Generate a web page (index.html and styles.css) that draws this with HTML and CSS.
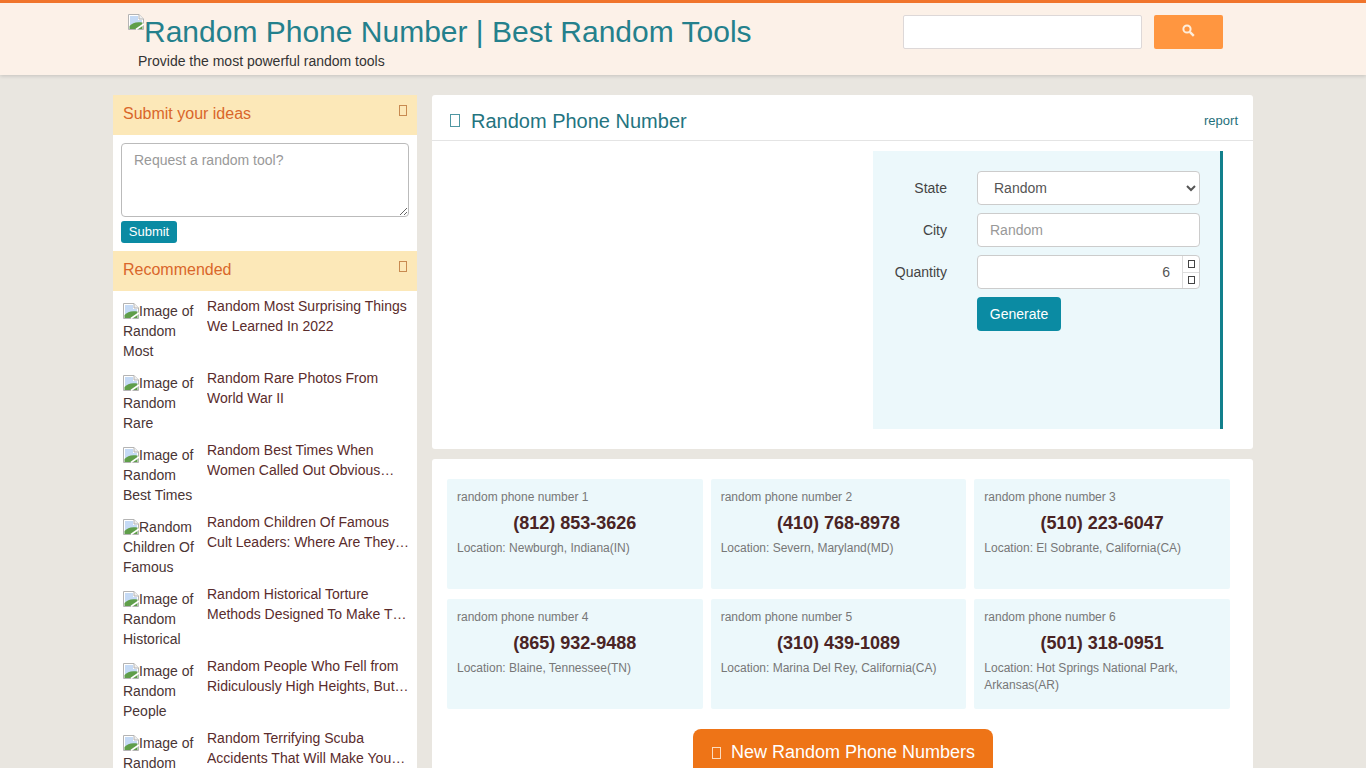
FILE: index.html
```html
<!DOCTYPE html>
<html lang="en">
<head>
<meta charset="utf-8">
<title>Random Phone Number</title>
<link rel="stylesheet" href="styles.css">
</head>
<body>
<svg class="defs" width="0" height="0" aria-hidden="true"><defs>
<symbol id="broken" viewBox="0 0 16 16">
<path d="M.5.5h10.500l4.500 4.500v10.500H.5z" fill="#fff" stroke="#b4b4b4"/>
<path d="M11 .5v4.500h4.500" fill="#f0f0f0" stroke="#b4b4b4"/>
<path d="M2 2h8v4h4v2.500L2 12z" fill="#c5daf5"/>
<path d="M1.500 15v-3c3-3.500 7-4.500 13-3.500V15z" fill="#5f9e4a"/>
<path d="M8 15.500l8-5.500" stroke="#fff" stroke-width="1.600"/>
</symbol>
</defs></svg>
<header class="site-header">
  <div class="header-inner">
    <div class="brand">
      <div class="logo"><svg class="broken-big"><use href="#broken"/></svg>Random Phone Number | Best Random Tools</div>
      <div class="tagline">Provide the most powerful random tools</div>
    </div>
    <form class="search">
      <input class="search-input" type="text" aria-label="Search">
      <button class="search-btn" type="button" aria-label="Search">
        <svg width="13" height="13" viewBox="0 0 13 13"><circle cx="5" cy="5" r="3.600" fill="none" stroke="#fdeedd" stroke-width="2"/><path d="M7.800 7.800l4 4" stroke="#fdeedd" stroke-width="2.400"/></svg>
      </button>
    </form>
  </div>
</header>
<div class="layout">
  <aside class="sidebar">
    <div class="side-head"><span>Submit your ideas</span><i class="tofu side-tofu"></i></div>
    <div class="idea-form">
      <textarea class="idea-text" placeholder="Request a random tool?"></textarea>
      <button class="btn-submit" type="button">Submit</button>
    </div>
    <div class="side-head"><span>Recommended</span><i class="tofu side-tofu"></i></div>
    <ul class="rec-list">
      <li class="rec"><div class="rec-img"><svg class="broken-small"><use href="#broken"/></svg>Image of Random Most</div><a class="rec-title">Random Most Surprising Things We Learned In 2022</a></li>
      <li class="rec"><div class="rec-img"><svg class="broken-small"><use href="#broken"/></svg>Image of Random Rare</div><a class="rec-title">Random Rare Photos From World War II</a></li>
      <li class="rec"><div class="rec-img"><svg class="broken-small"><use href="#broken"/></svg>Image of Random Best Times</div><a class="rec-title">Random Best Times When Women Called Out Obvious Sexism</a></li>
      <li class="rec"><div class="rec-img"><svg class="broken-small"><use href="#broken"/></svg>Random Children Of Famous</div><a class="rec-title">Random Children Of Famous Cult Leaders: Where Are They Now</a></li>
      <li class="rec"><div class="rec-img"><svg class="broken-small"><use href="#broken"/></svg>Image of Random Historical</div><a class="rec-title">Random Historical Torture Methods Designed To Make The Victim Suffer</a></li>
      <li class="rec"><div class="rec-img"><svg class="broken-small"><use href="#broken"/></svg>Image of Random People</div><a class="rec-title">Random People Who Fell from Ridiculously High Heights, But Survived</a></li>
      <li class="rec"><div class="rec-img"><svg class="broken-small"><use href="#broken"/></svg>Image of Random Terrifying</div><a class="rec-title">Random Terrifying Scuba Accidents That Will Make You Stay Ashore</a></li>
    </ul>
  </aside>
  <main class="content">
    <section class="panel tool">
      <div class="tool-head">
        <h1 class="tool-title"><i class="tofu title-tofu"></i>Random Phone Number</h1>
        <a class="report">report</a>
      </div>
      <div class="tool-body">
        <form class="gen-form">
          <label class="lbl">State</label>
          <div class="select-wrap"><select class="ctl sel"><option>Random</option></select></div>
          <label class="lbl">City</label>
          <input class="ctl" type="text" placeholder="Random">
          <label class="lbl">Quantity</label>
          <div class="ctl qty"><span class="qty-val">6</span><span class="spin"><span class="spin-cell"><i class="tofu spin-tofu"></i></span><span class="spin-cell"><i class="tofu spin-tofu"></i></span></span></div>
          <span></span>
          <button class="btn-gen" type="button">Generate</button>
        </form>
      </div>
    </section>
    <section class="panel results">
      <div class="grid">
        <article class="card"><div class="card-label">random phone number 1</div><div class="phone">(812) 853-3626</div><div class="loc">Location: Newburgh, Indiana(IN)</div></article>
        <article class="card"><div class="card-label">random phone number 2</div><div class="phone">(410) 768-8978</div><div class="loc">Location: Severn, Maryland(MD)</div></article>
        <article class="card"><div class="card-label">random phone number 3</div><div class="phone">(510) 223-6047</div><div class="loc">Location: El Sobrante, California(CA)</div></article>
        <article class="card"><div class="card-label">random phone number 4</div><div class="phone">(865) 932-9488</div><div class="loc">Location: Blaine, Tennessee(TN)</div></article>
        <article class="card"><div class="card-label">random phone number 5</div><div class="phone">(310) 439-1089</div><div class="loc">Location: Marina Del Rey, California(CA)</div></article>
        <article class="card"><div class="card-label">random phone number 6</div><div class="phone">(501) 318-0951</div><div class="loc">Location: Hot Springs National Park, Arkansas(AR)</div></article>
      </div>
      <div class="more-wrap"><button class="btn-more" type="button"><i class="tofu more-tofu"></i>New Random Phone Numbers</button></div>
    </section>
  </main>
</div>
</body>
</html>
```
FILE: styles.css
```css
* { box-sizing: border-box; }
html { overflow: hidden; height: 768px; }
body { margin: 0; height: 768px; overflow: hidden; background: #e9e6e0; font-family: "Liberation Sans", Arial, sans-serif; font-size: 14px; line-height: 20px; color: #444; }
.defs { position: absolute; }
.tofu { display: inline-block; border: 1px solid currentColor; }

.site-header { height: 75px; background: #fcf1e8; border-top: 3px solid #f0742b; box-shadow: 0 1px 4px rgba(0,0,0,.16); }
.header-inner { width: 1140px; margin: 0 auto; padding-left: 15px; display: flex; justify-content: space-between; }
.brand { padding-top: 10px; }
.logo { font-size: 30px; line-height: 38px; color: #24808c; white-space: nowrap; }
.broken-big { width: 16px; height: 16px; vertical-align: 12px; }
.tagline { margin: 0 0 0 10px; font-size: 14px; line-height: 20px; color: #333; }
.search { display: flex; gap: 12px; margin: 12px 30px 0 0; }
.search-input { width: 239px; height: 34px; border: 1px solid #ddd8d8; border-radius: 2px; background: #fff; }
.search-btn { width: 69px; height: 34px; border: 0; border-radius: 2px; background: #ff9640; padding: 0; }

.layout { width: 1140px; margin: 20px auto 0; display: flex; gap: 15px; }
.sidebar { width: 304px; background: #fff; border-radius: 3px; align-self: flex-start; }
.side-head { height: 40px; padding: 0 10px; background: #fce8b8; color: #d9662a; font-size: 16px; line-height: 37px; display: flex; justify-content: space-between; }
.side-tofu { width: 8px; height: 11px; margin: 10px 0 0; color: #c88a50; }
.idea-form { padding: 8px 8px 8px; }
.idea-text { display: block; width: 288px; height: 74px; padding: 6px 12px; border: 1px solid #bbb; border-radius: 4px; font: 14px/20px "Liberation Sans", Arial, sans-serif; color: #444; }
.idea-text::placeholder { color: #999; }
.btn-submit { display: block; margin-top: 4px; width: 56px; height: 22px; padding: 0; border: 0; border-radius: 3px; background: #0b8ba3; color: #fff; font: 13px/22px "Liberation Sans", Arial, sans-serif; }
.rec-list { list-style: none; margin: 0; padding: 10px 8px 0 10px; }
.rec { display: flex; height: 72px; gap: 8px; }
.rec-img { width: 76px; height: 62px; overflow: hidden; flex: none; color: #4a3535; font-size: 14px; line-height: 20px; }
.broken-small { width: 16px; height: 16px; vertical-align: -3px; }
.rec-title { flex: none; width: 204px; height: 40px; margin-top: -5px; color: #5a2c2c; font-size: 14px; line-height: 20px; display: -webkit-box; -webkit-line-clamp: 2; -webkit-box-orient: vertical; overflow: hidden; }

.content { width: 821px; display: flex; flex-direction: column; gap: 10px; }
.panel { background: #fff; border-radius: 3px; }
.tool { height: 354px; }
.tool-head { height: 46px; display: flex; justify-content: space-between; align-items: center; border-bottom: 1px solid #e4e4e4; padding: 6px 15px 0 18px; }
.tool-title { margin: 0; font-size: 20px; line-height: 28px; font-weight: 400; color: #24747f; display: flex; align-items: center; }
.title-tofu { width: 10px; height: 13px; margin-right: 11px; color: #4f97a3; }
.report { font-size: 13px; color: #1f6f7a; }
.tool-body { display: flex; justify-content: flex-end; padding: 10px 30px 0 0; }
.gen-form { width: 350px; height: 278px; background: #ecf8fb; border-right: 3px solid #12808c; padding: 20px 20px 0 0; display: grid; grid-template-columns: 74px 223px; column-gap: 30px; row-gap: 8px; grid-auto-rows: 34px; }
.lbl { text-align: right; line-height: 34px; color: #444; }
.ctl { width: 223px; height: 34px; border: 1px solid #ccc; border-radius: 4px; background: #fff; padding: 0 12px; font: 14px "Liberation Sans", Arial, sans-serif; color: #555; }
.ctl::placeholder { color: #999; }
.sel { padding: 0 12px; }
.qty { display: flex; padding: 0; justify-content: flex-end; }
.qty-val { line-height: 32px; padding-right: 12px; }
.spin { width: 17px; border-left: 1px solid #ddd; display: flex; flex-direction: column; }
.spin-cell { flex: 1; display: flex; align-items: center; justify-content: center; }
.spin-cell + .spin-cell { border-top: 1px solid #ddd; }
.spin-tofu { width: 7px; height: 8px; color: #444; }
.btn-gen { width: 84px; height: 34px; padding: 0; border: 0; border-radius: 4px; background: #0b8ba3; color: #fff; font: 14px "Liberation Sans", Arial, sans-serif; }

.results { flex: 1; padding: 20px 23px 0 15px; min-height: 330px; }
.grid { display: grid; grid-template-columns: repeat(3, 1fr); column-gap: 8px; row-gap: 10px; }
.card { height: 110px; padding: 10px 10px 0; background: #ecf8fb; border-radius: 2px; }
.card-label { font-size: 12px; line-height: 17px; color: #777; }
.phone { margin-top: 4px; text-align: center; font-size: 18px; line-height: 26px; font-weight: 700; color: #4a2424; }
.loc { margin-top: 4px; font-size: 12px; line-height: 17px; color: #777; }
.more-wrap { display: flex; justify-content: center; margin: 20px -23px 0 -15px; }
.btn-more { width: 300px; height: 50px; padding: 0 0 4px 2px; border: 0; border-radius: 8px; background: #ee7417; color: #fff; font: 18px "Liberation Sans", Arial, sans-serif; }
.more-tofu { width: 9px; height: 12px; margin-right: 10px; vertical-align: -1px; color: #fbdcc0; }
```
